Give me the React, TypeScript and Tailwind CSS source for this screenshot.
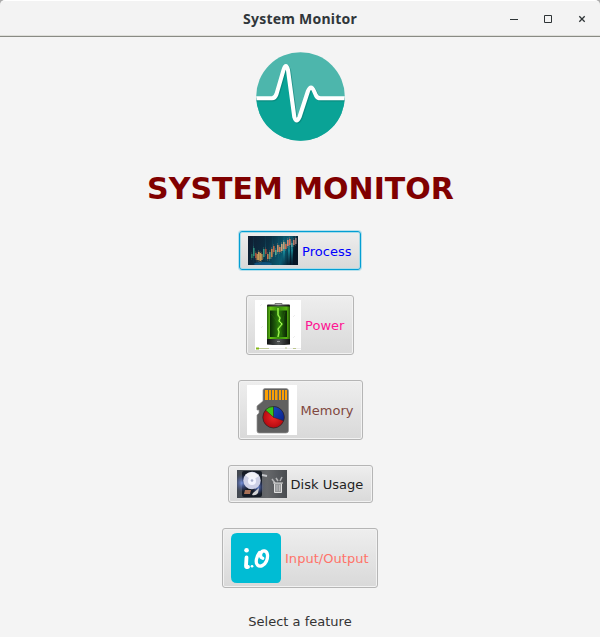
import type { ReactNode } from "react";

function Logo() {
  return (
    <svg width="90" height="90" viewBox="0 0 90 90" className="block">
      <defs>
        <clipPath id="disc"><circle cx="45.500" cy="44.500" r="44.300" /></clipPath>
      </defs>
      <g clipPath="url(#disc)">
        <rect width="90" height="90" fill="#4db6ac" />
        <path d="M0 46H18Q20 46 21.500 42L28.500 18Q31 11 33 18L39.500 65Q41.500 71 44.500 65L53 39Q56 33 59 38L61.500 44Q62.500 46.300 65 46.300H90V90H0Z" fill="#0aa396" />
        <path d="M0 46.300H17Q20 46.300 21.500 42L28.500 18Q31 10 33 18L39.300 65Q41.500 72 44.500 65L53 39Q56 32 59 39L61 43.500Q62.500 46.500 66 46.300H90" transform="translate(1 1)" fill="none" stroke="#087b73" strokeOpacity=".55" strokeWidth="4.200" />
        <path d="M0 46.300H17Q20 46.300 21.500 42L28.500 18Q31 10 33 18L39.300 65Q41.500 72 44.500 65L53 39Q56 32 59 39L61 43.500Q62.500 46.500 66 46.300H90" fill="none" stroke="#fff" strokeWidth="4.100" strokeLinejoin="round" />
      </g>
    </svg>
  );
}

const candles = [
  [3, 18, 4, "#2c765f"], [5, 12, 8, "#2d8d7b"], [7, 17, 5, "#a44b3c"],
  [8.5, 18, 6, "#b68a50"], [10, 16, 8, "#c69a5b"], [11.5, 17, 8, "#c49b58"],
  [13, 18, 6, "#b48b51"], [15, 13, 8, "#379685"], [17, 13, 5, "#a44c3d"],
  [19, 18, 5, "#c9774b"], [21, 16, 7, "#559e83"], [23, 13, 8, "#ca8050"],
  [25, 10, 6, "#bd694a"], [27, 14, 5, "#54a894"], [29, 9, 7, "#c99069"],
  [31, 11, 5, "#d67b4e"], [33, 8, 7, "#cda47b"], [35, 6, 7, "#b9a37d"],
  [37, 8, 5, "#d06b4c"], [39, 4, 6, "#d98771"], [41, 3, 6, "#dd7059"],
  [43, 7, 4, "#549da0"], [45, 4, 5, "#bc7766"], [47, 2, 6, "#927c7d"],
] as const;

function ProcessImage() {
  return (
    <svg width="50" height="29" viewBox="0 0 50 29" className="shrink-0">
      <defs>
        <linearGradient id="market" x2="1" y2=".2">
          <stop stopColor="#101c30" /><stop offset=".45" stopColor="#0b3044" />
          <stop offset=".8" stopColor="#0b5c72" /><stop offset="1" stopColor="#071626" />
        </linearGradient>
        <linearGradient id="beam" x2="0" y2="1">
          <stop stopColor="#15687d" stopOpacity=".2" /><stop offset=".5" stopColor="#24b2be" stopOpacity=".8" />
          <stop offset="1" stopColor="#0a3149" stopOpacity=".3" />
        </linearGradient>
        <filter id="soft"><feGaussianBlur stdDeviation=".4" /></filter>
      </defs>
      <rect width="50" height="29" fill="url(#market)" />
      {[5, 17, 24, 30, 35, 40, 43].map((x, i) => (
        <rect key={x} x={x} width={i > 3 ? 2 : 1} height="29" fill="url(#beam)" opacity={i > 3 ? 0.75 : 0.3} />
      ))}
      <ellipse cx="15" cy="28" rx="9" ry="2" fill="#126094" opacity=".7" filter="url(#soft)" />
      <g filter="url(#soft)">
        {candles.map(([x, y, h, color]) => (
          <g key={x}>
            <path d={`M${x + 0.5} ${y - 2}v${h + 4}`} stroke={color} strokeWidth=".5" opacity=".6" />
            <rect x={x} y={y} width="1.6" height={h} fill={color} />
          </g>
        ))}
      </g>
    </svg>
  );
}

function PowerImage() {
  return (
    <svg width="46" height="50" viewBox="0 0 46 50" className="shrink-0">
      <defs>
        <linearGradient id="cell"><stop stopColor="#276609" /><stop offset=".15" stopColor="#67c414" /><stop offset=".5" stopColor="#368e0b" /><stop offset=".85" stopColor="#57b311" /><stop offset="1" stopColor="#26580a" /></linearGradient>
        <linearGradient id="core"><stop stopColor="#0a2a05" /><stop offset=".5" stopColor="#2c7a0c" /><stop offset="1" stopColor="#0a2504" /></linearGradient>
        <linearGradient id="cap"><stop stopColor="#111313" /><stop offset=".5" stopColor="#515555" /><stop offset="1" stopColor="#111" /></linearGradient>
        <filter id="cellSoft"><feGaussianBlur stdDeviation=".25" /></filter>
      </defs>
      <rect width="46" height="50" fill="#fff" />
      <path d="M20 4.500V3.500h7v1" stroke="#777" fill="none" />
      <rect x="12" y="4.500" width="23" height="5" rx="1" fill="url(#cap)" />
      <rect x="12" y="6.500" width="23" height="33.500" fill="url(#cell)" />
      <rect x="15" y="10.500" width="17" height="26.500" fill="url(#core)" />
      <g filter="url(#cellSoft)">
        <path d="M16 14c5 5 10 14 11 22M30 12c-3 6 0 13-7 20" fill="none" stroke="#3b9d11" strokeWidth=".7" opacity=".35" />
        <path d="M23 8v7l2 3-1 3 3 3-4 5 1 3-1 5" fill="none" stroke="#62df18" strokeWidth="2" opacity=".6" />
        <path d="M23 8v7l2 3-1 3 3 3-4 5 1 3-1 5" fill="none" stroke="#b7fa68" strokeWidth=".9" />
      </g>
      <path d="M12 39h23v5.500q-11.500 1-23 0Z" fill="url(#cap)" />
      <path d="M22 41.500h3" stroke="#bbb" strokeWidth=".7" />
      <path d="M5 6l2-2M6 28l2-2M38 17l2-2M38 38l2-2" stroke="#eee" />
      <path d="M1 48.500h3" stroke="#84b815" strokeWidth="2" />
      <path d="M4 48.500h10" stroke="#a4b16a" strokeWidth=".7" />
      <path d="M14 48.500h32" stroke="#ddd" strokeWidth=".5" />
      <path d="M30 48h2M38 48.500h3" stroke="#a7b667" strokeWidth=".7" />
    </svg>
  );
}

function MemoryImage() {
  return (
    <svg width="50" height="50" viewBox="0 0 50 50" className="shrink-0">
      <defs>
        <radialGradient id="red"><stop stopColor="#ef2626" /><stop offset="1" stopColor="#b50a10" /></radialGradient>
        <linearGradient id="blue" x2="1" y2="1"><stop stopColor="#164bc1" /><stop offset="1" stopColor="#0a1f87" /></linearGradient>
      </defs>
      <rect width="50" height="50" fill="#fff" />
      <path d="M18 3.500h21q2.500 0 2.500 2.500v39.500q0 2.500-2.500 2.500H12q-2 0-2-2V30l2-2v-3h-2v-4l6-5V5.500q0-2 2-2Z" fill="#606060" stroke="#929292" strokeWidth=".7" />
      <path d="M18 5h3v10h-3zM22 5h2v10h-2zM25 5h2v10h-2zM28 5h2.500v10H28zM32 5h2v10h-2zM35 5h2v10h-2zM38 5h2v10h-2z" fill="#fca004" />
      <circle cx="26.500" cy="32.300" r="10.700" fill="url(#red)" stroke="#242424" strokeWidth=".7" />
      <path d="M26.500 32.300V21.600A10.700 10.700 0 0 1 36.600 35.800Z" fill="url(#blue)" stroke="#222" strokeWidth=".5" />
      <path d="M26.500 32.300l-8-7.300a10.700 10.700 0 0 1 8-3.400Z" fill="#39c71b" stroke="#222" strokeWidth=".5" />
    </svg>
  );
}

function DiskImage() {
  return (
    <svg width="50" height="28" viewBox="0 0 50 28" className="shrink-0">
      <defs>
        <linearGradient id="slate"><stop stopColor="#424850" /><stop offset=".6" stopColor="#66686b" /><stop offset="1" stopColor="#494c50" /></linearGradient>
        <radialGradient id="glow"><stop stopColor="#84a5ff" /><stop offset="1" stopColor="#4455aa" stopOpacity="0" /></radialGradient>
        <filter id="diskSoft"><feGaussianBlur stdDeviation=".5" /></filter>
      </defs>
      <rect width="50" height="28" fill="url(#slate)" />
      <rect x="5" y="1" width="20" height="26" rx="2" fill="#151b25" />
      <ellipse cx="5" cy="13" rx="8" ry="9" fill="url(#glow)" opacity=".8" />
      <ellipse cx="21" cy="17" rx="6" ry="8" fill="url(#glow)" opacity=".8" />
      <g filter="url(#diskSoft)">
        <circle cx="15" cy="10.500" r="8.700" fill="#cdd0e6" />
        <path d="M15 10.500L8 5q7-6 14 1Z" fill="#f2f2f8" />
        <circle cx="15" cy="11" r="4" fill="#f4f5ff" /><circle cx="15" cy="10.500" r="1.300" fill="#a7aeca" />
        <path d="M8 20h6l-1 4H7z" fill="#a77057" />
        <path d="M16 23l6-5-1 5q-2 3-6 2Z" fill="#d1d1d2" />
        <path d="M25 5l5 1" stroke="#c5c7cb" strokeWidth="2" />
        <path d="M35 9l3 4M39 8l2 3M45 7l-2 4" stroke="#b5b6b8" strokeWidth="1.500" />
      </g>
      <path d="M37 13h8l-.5 10h-7z" fill="#97999b" />
      <path d="M36 13h10M37.500 14v8.500h7V14" fill="none" stroke="#dedede" />
      <path d="M40 15v6m2.500-6v6" stroke="#c7c7c7" strokeWidth=".7" />
    </svg>
  );
}

function IOImage() {
  return (
    <svg width="50" height="50" viewBox="0 0 50 50" className="shrink-0">
      <path d="M6 0h40q4 1 4 5v41q-1 4-4 4H6q-6 0-6-6V6q0-6 6-6Z" fill="#00bcd4" />
      <g fill="none" stroke="#fff" strokeLinecap="round" strokeLinejoin="round">
        <path d="M15.500 24.500L15 33q0 1.500 2 1" strokeWidth="3.800" />
        <path d="M15.500 17.300h.1" strokeWidth="4.500" />
        <path d="M21 33.300h.1" strokeWidth="2.600" />
        <path d="M28.500 19.500c-3 4-4.500 10-2 12.500s7 .5 9-4c2-5 1-9.500-2-10-4-.5-5.500 6-1.800 7.200" strokeWidth="3.300" />
      </g>
    </svg>
  );
}

function FeatureButton({ children, label, size, color, focused = false }: {
  children: ReactNode; label: string; size: string; color: string; focused?: boolean;
}) {
  return (
    <button className={`flex shrink-0 items-center gap-1 whitespace-nowrap rounded-[3px] border bg-linear-to-b from-[#eeeeee] to-[#d9d9d9] px-2 py-1 text-[13px] leading-4 ${size} ${color} ${focused ? "border-[#039ed3] shadow-[0_0_0_1px_#b5e0ec,inset_0_0_0_1px_#a9dbe8]" : "border-[#b5b5b5] shadow-[inset_0_0_0_1px_#f2f2f2]"}`}>
      {children}
      <span className="pt-0.5 tracking-[0.03px]">{label}</span>
    </button>
  );
}

export default function App() {
  return (
    <div className="flex h-[637px] w-[600px] flex-col overflow-hidden bg-[#f4f4f4] font-['DejaVu_Sans',sans-serif] text-[#333]">
      <div className="shrink-0 bg-linear-to-b from-[#aaaaaa] to-[#f4f4f4]">
        <header className="grid h-[37px] grid-cols-[1fr_auto_1fr] items-center rounded-t-[5px] border-t border-b border-t-white border-b-[#898b84] bg-[#f3f3f3] shadow-[inset_0_-1px_0_#deded9]">
          <span />
          <h1 className="w-[114px] whitespace-nowrap text-center font-['Noto_Sans',sans-serif] text-[14px] font-bold leading-5 tracking-[0.22px] text-[#30363a]">System Monitor</h1>
          <div className="flex justify-end gap-6 pr-[13px]">
            <svg width="10" height="10" viewBox="0 0 10 10"><path d="M1 5.500h8" stroke="#2e3436" /></svg>
            <svg width="10" height="10" viewBox="0 0 10 10"><path d="M1.500 1.500h7v7h-7z" fill="none" stroke="#2e3436" /></svg>
            <svg width="10" height="10" viewBox="0 0 10 10"><path d="M2.300 2.300l5.400 5.400m0-5.400l-5.400 5.400" fill="none" stroke="#2e3436" strokeWidth="1.300" /></svg>
          </div>
        </header>
      </div>
      <main className="flex flex-col items-center pt-[15px]">
        <Logo />
        <h2 className="mt-[27px] mb-[26px] h-[36px] whitespace-nowrap pl-px text-[30px] font-bold leading-[40px] text-[#800000]">SYSTEM MONITOR</h2>
        <nav className="flex flex-col items-center gap-[25px]">
          <FeatureButton label="Process" size="h-[39px] w-[122px]" color="text-[#0000ff]" focused><ProcessImage /></FeatureButton>
          <FeatureButton label="Power" size="h-[60px] w-[108px]" color="text-[#ff1493]"><PowerImage /></FeatureButton>
          <FeatureButton label="Memory" size="h-[60px] w-[125px]" color="text-[#80483f]"><MemoryImage /></FeatureButton>
          <FeatureButton label="Disk Usage" size="h-[38px] w-[145px]" color="text-[#222222]"><DiskImage /></FeatureButton>
          <FeatureButton label="Input/Output" size="h-[60px] w-[156px]" color="text-[#ff7369]"><IOImage /></FeatureButton>
        </nav>
        <p className="mt-[26px] whitespace-nowrap text-[13px] leading-4">Select a feature</p>
      </main>
    </div>
  );
}
